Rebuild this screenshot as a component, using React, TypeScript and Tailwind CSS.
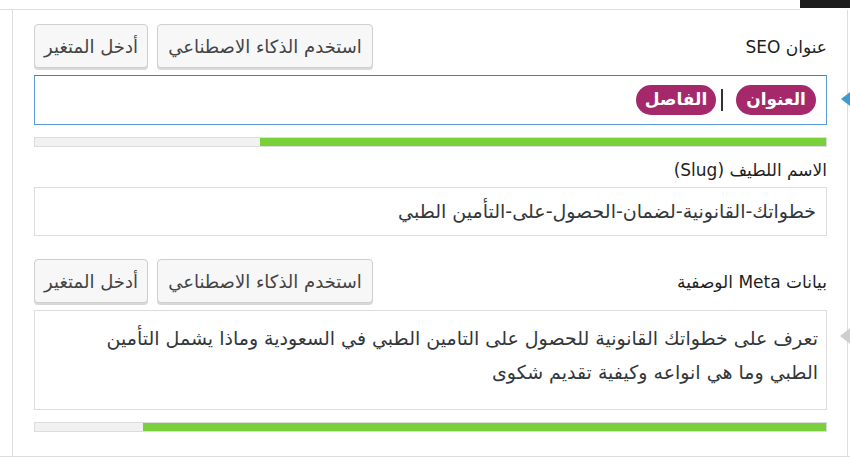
import React from "react";

const font = { fontFamily: '"DejaVu Sans", "Noto Sans", sans-serif' };

function ToolButtons() {
  return (
    <div className="flex gap-[9px]">
      <button
        type="button"
        className="h-[44px] px-[6px] w-[216px] whitespace-nowrap rounded-[4px] border border-[#cfcfcf] bg-[#f7f7f7] text-[18px] text-[#444] shadow-[0_2px_0_#d9d9d9]"
      >
        استخدم الذكاء الاصطناعي
      </button>
      <button
        type="button"
        className="h-[44px] px-[6px] w-[114px] whitespace-nowrap rounded-[4px] border border-[#cfcfcf] bg-[#f7f7f7] text-[18px] text-[#444] shadow-[0_2px_0_#d9d9d9]"
      >
        أدخل المتغير
      </button>
    </div>
  );
}

function Progress({ pct }: { pct: number }) {
  return (
    <div className="h-[10px] border border-[#dcdcdc] bg-[#f1f1f1] flex">
      <div className="h-full bg-[#7ad03a]" style={{ width: `${pct}%` }} />
    </div>
  );
}

function Pill({ label }: { label: string }) {
  return (
    <span className="h-[30px] w-[80px] rounded-full bg-[#a4286a] text-white font-bold text-[17px] flex items-center justify-center">
      {label}
    </span>
  );
}

export default function App() {
  return (
    <div className="w-[850px] h-[476px] bg-white relative overflow-hidden" style={font}>
      {/* top strip */}
      <div className="flex h-[10px]">
        <div className="flex-1 border-b border-[#dedede]" />
        <div className="w-[50px] h-[8px] bg-[#1d1d1d]" />
      </div>

      {/* panel */}
      <div className="ml-[12px] mr-[2px] h-[446px] border-l border-r border-[#dedede] relative">
        <div dir="rtl" className="pl-[21px] pr-[20px] pt-[14px] flex flex-col">
          <div className="flex items-end justify-between">
            <span className="text-[17px] text-[#1e1e1e] mb-[8px]">عنوان SEO</span>
            <ToolButtons />
          </div>

          <div className="mt-[7px] h-[50px] border border-[#5b9dd9] border-t-[#4a7fae] flex items-center pr-[10px]">
            <Pill label="العنوان" />
            <span className="w-[2px] h-[22px] bg-[#333] mr-[13px] ml-[5px]" />
            <Pill label="الفاصل" />
          </div>

          <div className="mt-[12px]">
            <Progress pct={71.5} />
          </div>

          <span className="mt-[13px] text-[17px] text-[#1e1e1e] leading-[20px]">
            الاسم اللطيف (Slug)
          </span>

          <div className="mt-[7px] h-[49px] border border-[#dddddd] flex items-center pr-[10px] text-[19px] text-[#32373c]">
            خطواتك-القانونية-لضمان-الحصول-على-التأمين الطبي
          </div>

          <div className="mt-[23px] flex items-end justify-between">
            <span className="text-[17px] text-[#1e1e1e] mb-[8px]">بيانات Meta الوصفية</span>
            <ToolButtons />
          </div>

          <div className="mt-[7px] h-[100px] border border-[#dddddd] pr-[8px] pt-[10px] text-[19px] leading-[34px] text-[#32373c] whitespace-nowrap">
            تعرف على خطواتك القانونية للحصول على التامين الطبي في السعودية وماذا يشمل التأمين
            <br />
            الطبي وما هي انواعه وكيفية تقديم شكوى
          </div>

          <div className="mt-[12px]">
            <Progress pct={86.4} />
          </div>
        </div>

        {/* side arrows */}
        <div className="absolute right-[-3px] top-[82px] w-0 h-0 border-y-[7px] border-y-transparent border-r-[9px] border-r-[#3e9bd1]" />
        <div className="absolute right-[-3px] top-[318px] w-0 h-0 border-y-[8px] border-y-transparent border-r-[10px] border-r-[#cfcfcf]" />
      </div>

      <div className="border-t border-[#dedede]" />
    </div>
  );
}
